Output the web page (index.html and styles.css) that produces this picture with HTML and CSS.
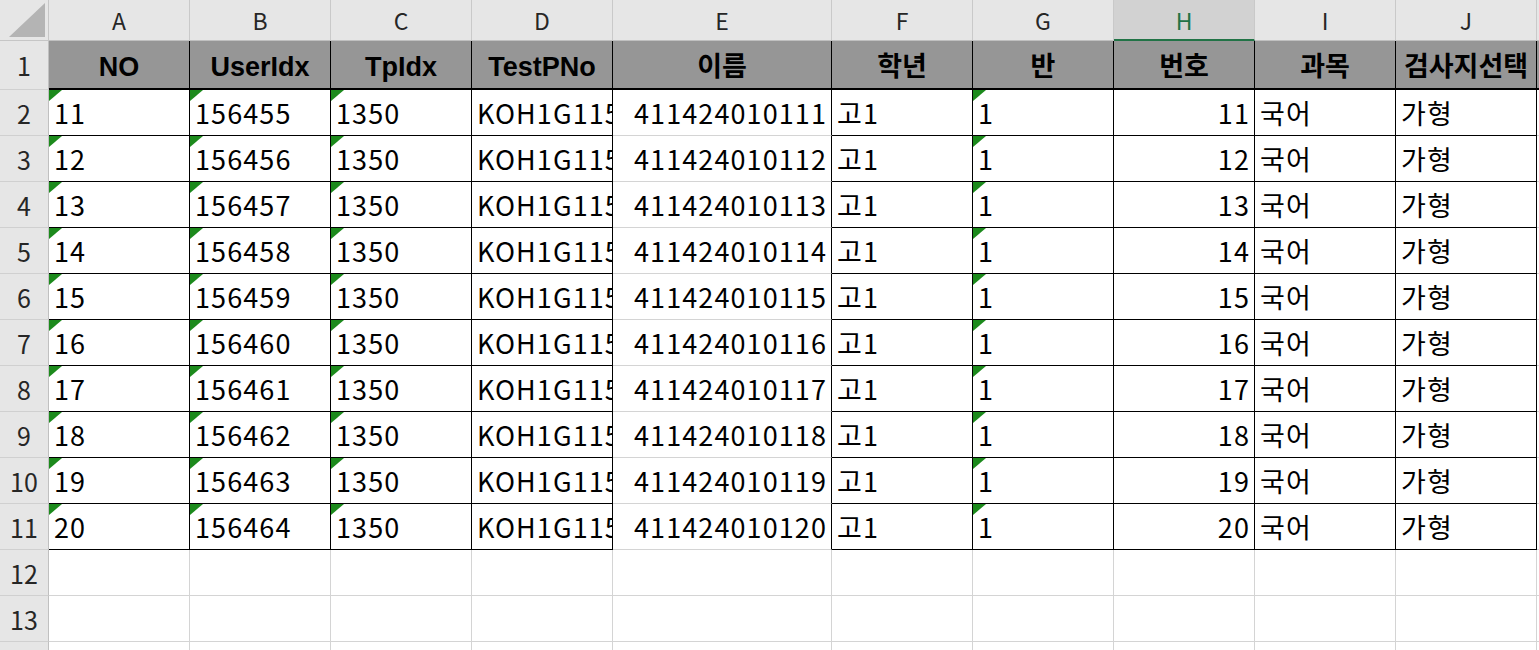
FILE: index.html
```html
<!DOCTYPE html>
<html lang="ko">
<head>
<meta charset="utf-8">
<title>Sheet</title>
<link rel="stylesheet" href="styles.css">
</head>
<body>
<div class="sheet">
  <div class="corner"><svg class="corner-tri" width="48" height="41" viewBox="0 0 48 41"><polygon points="45,3 45,37 9,37" fill="#b4b4b4"/></svg></div>
  <div class="ch">A</div><div class="ch">B</div><div class="ch">C</div><div class="ch">D</div><div class="ch">E</div><div class="ch">F</div><div class="ch">G</div><div class="ch sel">H</div><div class="ch">I</div><div class="ch">J</div><div class="ch"></div>

  <div class="rh">1</div>
  <div class="c hd">NO</div><div class="c hd">UserIdx</div><div class="c hd">TpIdx</div><div class="c hd">TestPNo</div><div class="c hd">이름</div><div class="c hd">학년</div><div class="c hd">반</div><div class="c hd">번호</div><div class="c hd">과목</div><div class="c hd">검사지선택</div><div class="c hk"></div>

  <div class="rh">2</div>
  <div class="c b t">11</div><div class="c b t">156455</div><div class="c b t">1350</div><div class="c b">KOH1G1150001</div><div class="c e r">411424010111</div><div class="c b">고1</div><div class="c b t">1</div><div class="c b r">11</div><div class="c b">국어</div><div class="c b">가형</div><div class="c"></div>

  <div class="rh">3</div>
  <div class="c b t">12</div><div class="c b t">156456</div><div class="c b t">1350</div><div class="c b">KOH1G1150001</div><div class="c e r">411424010112</div><div class="c b">고1</div><div class="c b t">1</div><div class="c b r">12</div><div class="c b">국어</div><div class="c b">가형</div><div class="c"></div>

  <div class="rh">4</div>
  <div class="c b t">13</div><div class="c b t">156457</div><div class="c b t">1350</div><div class="c b">KOH1G1150001</div><div class="c e r">411424010113</div><div class="c b">고1</div><div class="c b t">1</div><div class="c b r">13</div><div class="c b">국어</div><div class="c b">가형</div><div class="c"></div>

  <div class="rh">5</div>
  <div class="c b t">14</div><div class="c b t">156458</div><div class="c b t">1350</div><div class="c b">KOH1G1150001</div><div class="c e r">411424010114</div><div class="c b">고1</div><div class="c b t">1</div><div class="c b r">14</div><div class="c b">국어</div><div class="c b">가형</div><div class="c"></div>

  <div class="rh">6</div>
  <div class="c b t">15</div><div class="c b t">156459</div><div class="c b t">1350</div><div class="c b">KOH1G1150001</div><div class="c e r">411424010115</div><div class="c b">고1</div><div class="c b t">1</div><div class="c b r">15</div><div class="c b">국어</div><div class="c b">가형</div><div class="c"></div>

  <div class="rh">7</div>
  <div class="c b t">16</div><div class="c b t">156460</div><div class="c b t">1350</div><div class="c b">KOH1G1150001</div><div class="c e r">411424010116</div><div class="c b">고1</div><div class="c b t">1</div><div class="c b r">16</div><div class="c b">국어</div><div class="c b">가형</div><div class="c"></div>

  <div class="rh">8</div>
  <div class="c b t">17</div><div class="c b t">156461</div><div class="c b t">1350</div><div class="c b">KOH1G1150001</div><div class="c e r">411424010117</div><div class="c b">고1</div><div class="c b t">1</div><div class="c b r">17</div><div class="c b">국어</div><div class="c b">가형</div><div class="c"></div>

  <div class="rh">9</div>
  <div class="c b t">18</div><div class="c b t">156462</div><div class="c b t">1350</div><div class="c b">KOH1G1150001</div><div class="c e r">411424010118</div><div class="c b">고1</div><div class="c b t">1</div><div class="c b r">18</div><div class="c b">국어</div><div class="c b">가형</div><div class="c"></div>

  <div class="rh">10</div>
  <div class="c b t">19</div><div class="c b t">156463</div><div class="c b t">1350</div><div class="c b">KOH1G1150001</div><div class="c e r">411424010119</div><div class="c b">고1</div><div class="c b t">1</div><div class="c b r">19</div><div class="c b">국어</div><div class="c b">가형</div><div class="c"></div>

  <div class="rh">11</div>
  <div class="c b t">20</div><div class="c b t">156464</div><div class="c b t">1350</div><div class="c b">KOH1G1150001</div><div class="c e r">411424010120</div><div class="c b">고1</div><div class="c b t">1</div><div class="c b r">20</div><div class="c b">국어</div><div class="c b">가형</div><div class="c"></div>

  <div class="rh">12</div>
  <div class="c"></div><div class="c"></div><div class="c"></div><div class="c"></div><div class="c"></div><div class="c"></div><div class="c"></div><div class="c"></div><div class="c"></div><div class="c"></div><div class="c"></div>

  <div class="rh">13</div>
  <div class="c"></div><div class="c"></div><div class="c"></div><div class="c"></div><div class="c"></div><div class="c"></div><div class="c"></div><div class="c"></div><div class="c"></div><div class="c"></div><div class="c"></div>

  <div class="rh rh-cut"></div>
  <div class="c"></div><div class="c"></div><div class="c"></div><div class="c"></div><div class="c"></div><div class="c"></div><div class="c"></div><div class="c"></div><div class="c"></div><div class="c"></div><div class="c"></div>
</div>
</body>
</html>
```

FILE: styles.css
```css
html, body {
  margin: 0;
  padding: 0;
  background: #ffffff;
  overflow: hidden;
}

.sheet {
  display: grid;
  grid-template-columns: 49px 141px 141px 141px 141px 219px 141px 141px 141px 141px 141px 1fr;
  grid-template-rows: 41px 49px repeat(13, 46px);
  width: 1539px;
  height: 650px;
  overflow: hidden;
  font-family: "Noto Sans CJK KR", sans-serif;
  color: #000;
}

.corner {
  background: #e6e6e6;
  border-right: 1px solid #c6c6c6;
  border-bottom: 1px solid #c6c6c6;
  box-sizing: border-box;
  position: relative;
}

.corner-tri {
  position: absolute;
  left: 0;
  top: 0;
}

.ch {
  background: #e6e6e6;
  border-right: 1px solid #c9c9c9;
  border-bottom: 1px solid #c0c0c0;
  box-sizing: border-box;
  display: flex;
  align-items: center;
  justify-content: center;
  font-family: "Noto Sans CJK KR", sans-serif;
  font-size: 23px;
  line-height: 1;
  color: #262626;
}

.ch.sel {
  background: #d2d2d2;
  color: #217346;
  border-bottom: 2px solid #217346;
  padding-top: 1px;
}

.rh {
  background: #e6e6e6;
  border-right: 1px solid #c0c0c0;
  border-bottom: 1px solid #d0d0d0;
  box-sizing: border-box;
  display: flex;
  align-items: center;
  justify-content: center;
  font-size: 25px;
  line-height: 1;
  color: #262626;
  padding-top: 1px;
}

.c {
  position: relative;
  box-sizing: border-box;
  border-right: 1px solid #d4d4d4;
  border-bottom: 1px solid #d4d4d4;
  display: flex;
  align-items: center;
  overflow: hidden;
  white-space: nowrap;
  padding: 0 5px 0 5px;
  font-size: 27px;
  line-height: 1;
  letter-spacing: 1.1px;
}

.c.b {
  border-right-color: #000;
  border-bottom-color: #000;
}

.c.e {
  border-right-color: #000;
}

.c.r {
  justify-content: flex-end;
  padding-right: 4px;
}

.c.t::before {
  content: "";
  position: absolute;
  left: 0;
  top: 0;
  width: 0;
  height: 0;
  border-top: 11px solid #1c8a1c;
  border-right: 13px solid transparent;
}

.c.hd {
  background: #969696;
  border-right-color: #000;
  border-bottom: 2px solid #000;
  justify-content: center;
  font-family: "Liberation Sans", "Noto Sans CJK KR", sans-serif;
  font-weight: bold;
  letter-spacing: 0;
  padding: 5px 0 0 0;
}

.c.hk {
  background: #969696;
  border-right: none;
  border-bottom: 2px solid #000;
}
```
